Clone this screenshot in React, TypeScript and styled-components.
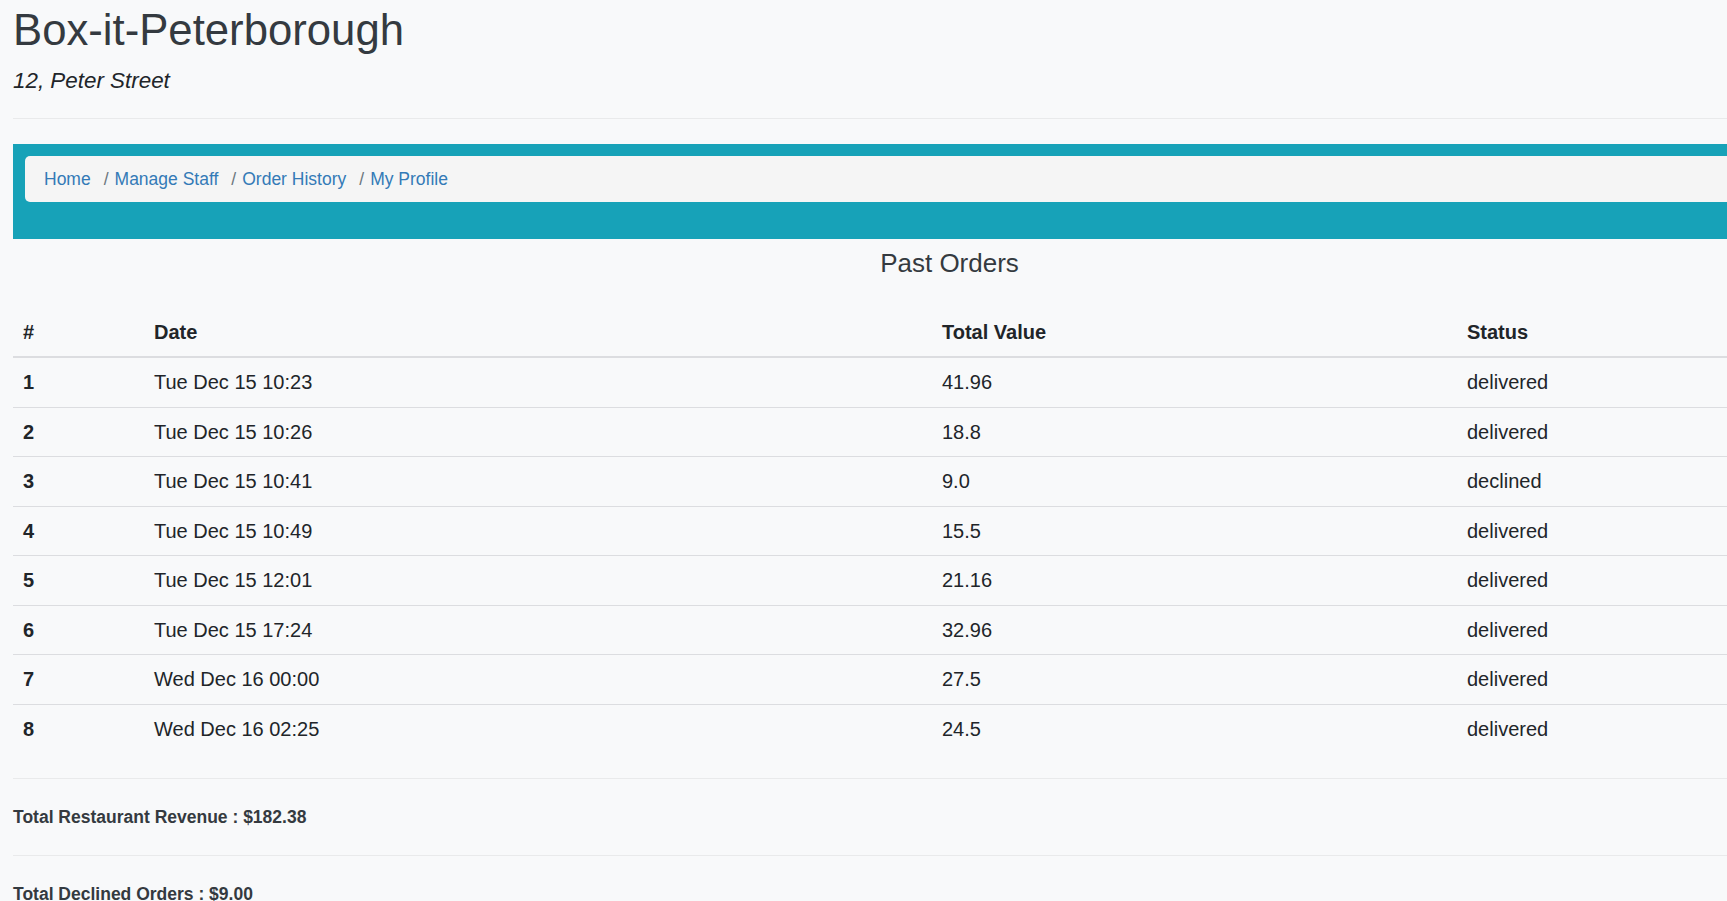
import React from "react";
import styled, { createGlobalStyle } from "styled-components";

const GlobalStyle = createGlobalStyle`
  html, body {
    margin: 0;
    padding: 0;
    background: #f8f9fa;
    overflow: hidden;
  }
  body {
    font-family: "Liberation Sans", Arial, Helvetica, sans-serif;
    color: #212529;
  }
`;

const Page = styled.div`
  width: 1873px;
  padding-left: 13px;
  box-sizing: content-box;
`;

const Title = styled.h1`
  margin: 5px 0 0;
  font-size: 43.7px;
  line-height: 50px;
  font-weight: 400;
  color: #343a40;
`;

const Address = styled.p`
  margin: 9px 0 0;
  font-size: 22.4px;
  line-height: 33px;
  font-style: italic;
  color: #212529;
`;

const Divider = styled.hr<{ $top: number }>`
  margin: ${(p) => p.$top}px 0 0;
  border: 0;
  border-top: 1px solid #e9eaeb;
  height: 0;
`;

const NavBand = styled.nav`
  margin-top: 25px;
  background: #17a2b8;
  padding: 12px 0 37px 12px;
`;

const Breadcrumb = styled.ol`
  list-style: none;
  margin: 0;
  display: flex;
  align-items: center;
  background: #f5f5f5;
  border-radius: 5px;
  padding: 11px 19px 9.5px;
  font-size: 17.5px;
  line-height: 25px;
`;

const Crumb = styled.li<{ $first?: boolean }>`
  display: flex;
  &::before {
    content: ${(p) => (p.$first ? "none" : '"/"')};
    color: #6c757d;
    margin: 0 6px 0 13px;
  }
`;

const CrumbLink = styled.a`
  color: #337ab7;
  text-decoration: none;
`;

const SectionTitle = styled.h3`
  margin: 10px 0 0;
  font-size: 26px;
  line-height: 28px;
  font-weight: 400;
  text-align: center;
  color: #343a40;
`;

const Table = styled.table`
  width: 100%;
  margin: 31px 0 24px;
  border-collapse: collapse;
  table-layout: fixed;
  font-size: 20px;
  line-height: 28.57px;
`;

const Th = styled.th`
  text-align: left;
  padding: 10px;
  font-weight: 700;
  color: #212529;
  border-bottom: 2px solid #dcdde0;
`;

const Td = styled.td<{ $bold?: boolean }>`
  padding: 10px;
  border-top: 1px solid #dcdde0;
  font-weight: ${(p) => (p.$bold ? 700 : 400)};
  color: #212529;
  vertical-align: top;
`;

const SummaryLine = styled.div`
  padding: 26px 0 25px;
  font-size: 17.5px;
  line-height: 25px;
  font-weight: 700;
  color: #343a40;
`;

const orders = [
  { id: 1, date: "Tue Dec 15 10:23", value: "41.96", status: "delivered" },
  { id: 2, date: "Tue Dec 15 10:26", value: "18.8", status: "delivered" },
  { id: 3, date: "Tue Dec 15 10:41", value: "9.0", status: "declined" },
  { id: 4, date: "Tue Dec 15 10:49", value: "15.5", status: "delivered" },
  { id: 5, date: "Tue Dec 15 12:01", value: "21.16", status: "delivered" },
  { id: 6, date: "Tue Dec 15 17:24", value: "32.96", status: "delivered" },
  { id: 7, date: "Wed Dec 16 00:00", value: "27.5", status: "delivered" },
  { id: 8, date: "Wed Dec 16 02:25", value: "24.5", status: "delivered" },
];

const crumbs = ["Home", "Manage Staff", "Order History", "My Profile"];

export default function App() {
  return (
    <>
      <GlobalStyle />
      <Page>
        <Title>Box-it-Peterborough</Title>
        <Address>12, Peter Street</Address>
        <Divider $top={21} />
        <NavBand>
          <Breadcrumb>
            {crumbs.map((c, i) => (
              <Crumb key={c} $first={i === 0}>
                <CrumbLink href="#">{c}</CrumbLink>
              </Crumb>
            ))}
          </Breadcrumb>
        </NavBand>
        <SectionTitle>Past Orders</SectionTitle>
        <Table>
          <colgroup>
            <col style={{ width: 131 }} />
            <col style={{ width: 788 }} />
            <col style={{ width: 525 }} />
            <col />
          </colgroup>
          <thead>
            <tr>
              <Th>#</Th>
              <Th>Date</Th>
              <Th>Total Value</Th>
              <Th>Status</Th>
            </tr>
          </thead>
          <tbody>
            {orders.map((o) => (
              <tr key={o.id}>
                <Td $bold>{o.id}</Td>
                <Td>{o.date}</Td>
                <Td>{o.value}</Td>
                <Td>{o.status}</Td>
              </tr>
            ))}
          </tbody>
        </Table>
        <Divider $top={0} />
        <SummaryLine>Total Restaurant Revenue : $182.38</SummaryLine>
        <Divider $top={0} />
        <SummaryLine>Total Declined Orders : $9.00</SummaryLine>
      </Page>
    </>
  );
}
